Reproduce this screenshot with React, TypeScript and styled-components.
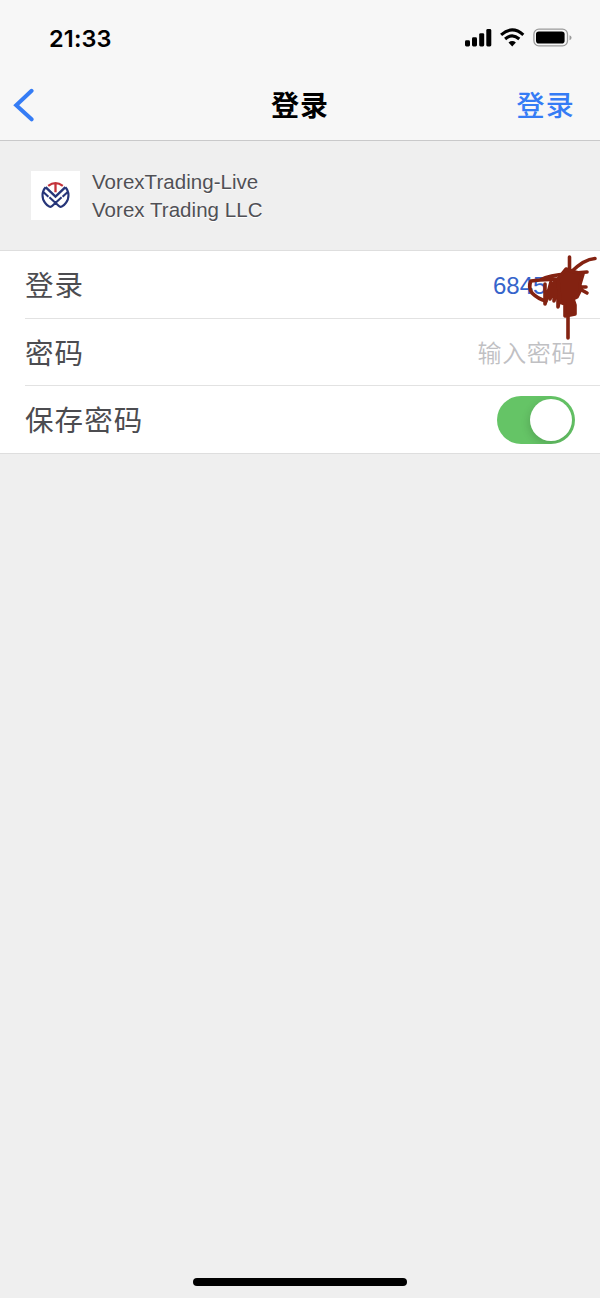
import React, { useState } from "react";
import styled, { createGlobalStyle } from "styled-components";

const GlobalStyle = createGlobalStyle`
  * { box-sizing: border-box; }
  body {
    margin: 0;
    background: #efefef;
    font-family: "Liberation Sans", "Noto Sans CJK SC", sans-serif;
  }
`;

const Screen = styled.main`
  display: flex;
  flex-direction: column;
  width: 600px;
  height: 1298px;
  background: #efefef;
  overflow: hidden;
`;

const Header = styled.header`
  height: 141px;
  background: #f7f7f7;
  border-bottom: 1px solid #c9c9ca;
`;

const StatusBar = styled.div`
  display: flex;
  align-items: center;
  justify-content: space-between;
  height: 76px;
  padding: 0 28px 0 49px;
`;

const Clock = styled.time`
  padding-top: 1px;
  font: 600 23.5px/29px Inter, sans-serif;
  letter-spacing: 0.15px;
  color: #000;
`;

const StatusIcons = styled.svg`
  display: block;
`;

const NavBar = styled.nav`
  display: grid;
  grid-template-columns: 1fr auto 1fr;
  align-items: center;
  height: 58px;
  padding: 0 25px 0 13px;
`;

const BackButton = styled.button`
  display: flex;
  justify-self: start;
  padding: 0;
  border: 0;
  background: none;
`;

const Title = styled.h1`
  margin: 0 -12px 2px 0;
  font: 700 28px/40px "Noto Sans CJK SC", sans-serif;
  letter-spacing: 1px;
  color: #000;
`;

const LoginButton = styled.button`
  justify-self: end;
  padding: 0 0 2px;
  border: 0;
  background: none;
  font: 500 28px/40px "Noto Sans CJK SC", sans-serif;
  letter-spacing: 1.2px;
  color: #357cf5;
`;

const Server = styled.section`
  display: flex;
  align-items: center;
  gap: 12px;
  height: 109px;
  padding-left: 31px;
`;

const Logo = styled.svg`
  display: block;
  background: #fff;
`;

const ServerText = styled.div`
  padding-top: 1px;
  font-size: 20.5px;
  line-height: 28px;
  letter-spacing: 0.04px;
  color: #505055;
  text-shadow: 0 1px 0 #fff;
`;

const Form = styled.section`
  background: #fff;
  border-top: 1px solid #dedede;
  border-bottom: 1px solid #dedede;
`;

const Row = styled.div<{ $height: number; $last?: boolean }>`
  display: flex;
  align-items: center;
  justify-content: space-between;
  height: ${(p) => p.$height}px;
  margin-left: 25px;
  padding-right: 25px;
  border-bottom: ${(p) => (p.$last ? "0" : "1px solid #e2e2e2")};
`;

const Label = styled.span`
  padding-bottom: 1px;
  font: 400 28.5px/42px "Noto Sans CJK SC", sans-serif;
  letter-spacing: 1.1px;
  color: #4c4c50;
`;

const Account = styled.div`
  position: relative;
  width: 83px;
  padding: 2px 0 0 1px;
  font-size: 24px;
  line-height: 30px;
  color: #3564cb;
`;

const Scribble = styled.svg`
  position: absolute;
  top: -15px;
  left: 32px;
  pointer-events: none;
`;

const Placeholder = styled.span`
  margin-right: -1px;
  font: 350 24px/36px "Noto Sans CJK SC", sans-serif;
  letter-spacing: 0.6px;
  color: #c0c0c3;
`;

const Toggle = styled.button<{ $on: boolean }>`
  display: flex;
  align-items: center;
  justify-content: ${(p) => (p.$on ? "flex-end" : "flex-start")};
  width: 78px;
  height: 48px;
  padding: 3px;
  border: 0;
  border-radius: 24px;
  background: ${(p) => (p.$on ? "#65c466" : "#e5e5e5")};
  overflow: hidden;
`;

const Knob = styled.span`
  width: 42px;
  height: 42px;
  border-radius: 50%;
  background: #fff;
  box-shadow: -1px 3px 8px rgba(0, 0, 0, 0.15);
`;

const HomeIndicator = styled.div`
  width: 214px;
  height: 8px;
  margin: auto auto 12px 193px;
  border-radius: 4px;
  background: #000;
`;

export default function App() {
  const [save, setSave] = useState(true);
  return (
    <Screen>
      <GlobalStyle />
      <Header>
        <StatusBar>
          <Clock>21:33</Clock>
          <StatusIcons width="108" height="22" viewBox="0 0 108 22">
            <rect x="1" y="13.3" width="5" height="6.2" rx="1.4" />
            <rect x="8" y="10.3" width="5" height="9.2" rx="1.4" />
            <rect x="15.2" y="6.2" width="5" height="13.3" rx="1.4" />
            <rect x="22.3" y="2" width="5" height="17.5" rx="1.4" />
            <g fill="none" stroke="#000" strokeWidth="3.1">
              <path d="M37.1 7.8Q48.2-2 59.3 7.8" />
              <path d="M41.1 12Q48.2 5.8 55.3 12" />
            </g>
            <path d="M44.5 15.5Q48.2 12.6 51.9 15.5L48.2 19.4Z" />
            <rect x="69.9" y="2.2" width="33.6" height="16.6" rx="5" fill="none" stroke="#9b9b9b" strokeWidth="1.3" />
            <rect x="72" y="4.5" width="28.6" height="12" rx="2.8" />
            <path d="M105.5 8.2Q107.6 8.8 107.6 10.7T105.5 13.2Z" fill="#9b9b9b" />
          </StatusIcons>
        </StatusBar>
        <NavBar>
          <BackButton aria-label="返回">
            <svg width="22" height="34" viewBox="0 0 22 34">
              <path d="M18.6 2.8L3.2 17.2L18.6 31.3" fill="none" stroke="#357cf5" strokeWidth="4" strokeLinecap="round" strokeLinejoin="miter" />
            </svg>
          </BackButton>
          <Title>登录</Title>
          <LoginButton>登录</LoginButton>
        </NavBar>
      </Header>

      <Server>
        <Logo width="49" height="49" viewBox="0 0 49 49" fill="none">
          <g stroke="#263579" strokeWidth="2.1">
            <path d="M14.6 16.2C10.6 20.4 10.5 27.8 14.2 32Q18.6 37.8 21.4 34.8L30.6 26.2M34.4 16.2C38.4 20.4 38.5 27.8 34.8 32Q30.4 37.8 27.6 34.8L18.4 26.2" />
            <path d="M14.6 16.2L24.5 25.6L34.4 16.2" strokeWidth="2.4" />
            <path d="M12.6 21.2L17.4 25.8M36.4 21.2L31.6 25.8" />
          </g>
          <path d="M17.2 14.8Q24.5 9.4 31.8 14.8M24.5 12.5V21.2" stroke="#c4333a" strokeWidth="2.3" />
        </Logo>
        <ServerText>
          <div>VorexTrading-Live</div>
          <div>Vorex Trading LLC</div>
        </ServerText>
      </Server>

      <Form>
        <Row $height={68}>
          <Label>登录</Label>
          <Account>
            6845
            <Scribble width="76" height="88" viewBox="524 254 76 88" fill="none" stroke="#832211" strokeWidth="3.6" strokeLinecap="round" strokeLinejoin="round">
              <path d="M569.5 257V276M568 312V338M570 273Q584 259 595 258.5" />
              <path d="M567 274Q550 275 540 280L531 281Q528 287 532 293Q538 299 546 301M540 280L560 279" />
              <path d="M545 284V304L551 282L550 299L555 281L554 301L558 282L558 307L563 281" />
              <path d="M575 273L587 272M578 288L587 293M579 287L586 287" />
              <path d="M558 279L566 269L575 272L583 274L580 284L580 291L577 297L573 299L575 305V314L565 316V304L560 302Z" fill="#832211" />
            </Scribble>
          </Account>
        </Row>
        <Row $height={67}>
          <Label>密码</Label>
          <Placeholder>输入密码</Placeholder>
        </Row>
        <Row $height={67} $last>
          <Label>保存密码</Label>
          <Toggle $on={save} role="switch" aria-checked={save} aria-label="保存密码" onClick={() => setSave(!save)}>
            <Knob />
          </Toggle>
        </Row>
      </Form>
      <HomeIndicator />
    </Screen>
  );
}
